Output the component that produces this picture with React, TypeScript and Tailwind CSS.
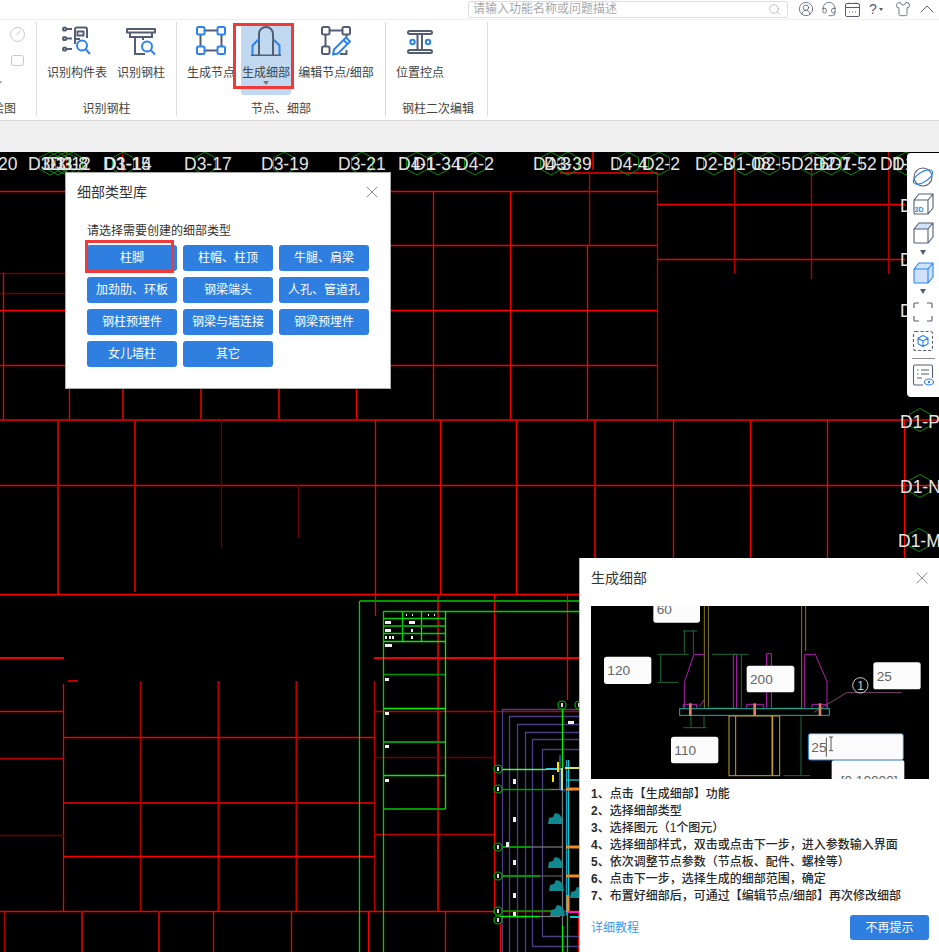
import React from "react";
import { ChevronUp, CircleUserRound, Headset, Search, Shirt, X } from "lucide-react";

const R = "#ff0000";
const M = "#f00000";
const D = "#b80000";
const K = "#700000";
const G = "#00d000";
const DG = "#009800";
const LG = "#00f000";
const P = "#4a3d84";
const BLUE = "#2b83ee";
const GREY = "#545e72";

// x1, y1, x2, y2, colour, width
type Seg = [number, number, number, number, string, number?];

const redLines: Seg[] = [
  [0, 191.5, 657, 191.5, M],
  [0, 273.5, 65, 273.5, K],
  [0, 293.5, 65, 293.5, K],
  [0, 310.5, 657, 310.5, R],
  [0, 365.5, 657, 365.5, M],
  [391, 245.5, 657, 245.5, M],
  [3.5, 273, 3.5, 420, M],
  [69.5, 388, 69.5, 420, M],
  [123, 388, 123, 420, D, 2],
  [201, 388, 201, 420, D, 2],
  [279, 388, 279, 420, D, 2],
  [356.5, 388, 356.5, 420, M],
  [66.5, 152, 66.5, 172, D],
  [122.5, 152, 122.5, 172, D],
  [433.5, 191, 433.5, 420, M],
  [510.5, 191, 510.5, 420, M],
  [587.5, 245, 587.5, 420, R],
  [589.5, 172, 589.5, 245, D],
  [657.5, 172, 657.5, 420, D],
  [593, 152, 593, 170, D, 2],
  [560, 173, 657, 173, D, 2],
  [657, 204.5, 905, 204.5, M],
  [657, 259.5, 905, 259.5, M],
  [734.5, 152, 734.5, 274, D],
  [811.5, 152, 811.5, 279, D],
  [888.5, 152, 888.5, 274, D],
  [0, 420, 939, 420, D, 2],
  [0, 485.5, 939, 485.5, M],
  [58, 420, 58, 594, D, 2],
  [135, 420, 135, 592, D, 2],
  [221.5, 420, 221.5, 547, K],
  [298.5, 485, 298.5, 538, K],
  [375.5, 420, 375.5, 616, M],
  [440.5, 420, 440.5, 594, M],
  [516.5, 420, 516.5, 594, M],
  [595, 420, 595, 558, D, 2],
  [673.5, 420, 673.5, 558, M],
  [750.5, 420, 750.5, 558, M],
  [827.5, 420, 827.5, 558, R],
  [904.5, 420, 904.5, 558, R],
  [0, 594.5, 579, 594.5, R],
  [438, 594, 438, 911, D, 2],
  [494.5, 594, 494.5, 911, M],
  [567.5, 594, 567.5, 700, M],
  [0, 658, 64, 658, M, 2],
  [374, 658, 579, 658, M, 2],
  [68, 681, 78, 681, D, 2],
  [374.5, 681, 374.5, 911, D],
  [374, 711.5, 579, 711.5, D],
  [374, 757.5, 494, 757.5, K],
  [374, 834.5, 494, 834.5, D],
  [63.5, 684, 63.5, 911, M],
  [140.5, 681, 140.5, 911, D],
  [218.5, 681, 218.5, 911, D, 2],
  [296.5, 681, 296.5, 911, D, 2],
  [0, 711.5, 64, 711.5, M],
  [0, 758.5, 64, 758.5, D],
  [0, 835.5, 64, 835.5, K],
  [64, 737.5, 374, 737.5, M],
  [64, 803, 374, 803, D, 2],
  [64, 856.5, 374, 856.5, R],
  [0, 911.5, 579, 911.5, M],
  [4.5, 911, 4.5, 952, D],
  [82, 911, 82, 952, D, 2],
  [159, 911, 159, 952, D, 2],
  [213.5, 911, 213.5, 952, M],
  [291.5, 911, 291.5, 952, M],
  [368.5, 911, 368.5, 952, R],
  [445.5, 911, 445.5, 952, M],
  [500.5, 911, 500.5, 952, M],
  [578.5, 911, 578.5, 952, M],
];

const greenLines: Seg[] = [
  [359.5, 601, 359.5, 952, G],
  [360, 601, 579, 601, DG, 2],
  [383.5, 611, 383.5, 952, G],
  [384, 611.5, 579, 611.5, G],
  [445.5, 611, 445.5, 809, LG],
  [402.5, 611, 402.5, 641, G],
  [421.5, 611, 421.5, 641, LG],
  [384, 618.5, 445, 618.5, G],
  [384, 626, 445, 626, DG, 2],
  [384, 633.5, 445, 633.5, G],
  [384, 641.5, 445, 641.5, LG],
  [384, 674.5, 445, 674.5, DG],
  [384, 708.5, 445, 708.5, LG],
  [384, 742, 445, 742, DG, 2],
  [384, 775.5, 445, 775.5, LG],
  [384, 809, 445, 809, DG, 2],
];

const planLines: Seg[] = [
  [502, 709.5, 579, 709.5, P],
  [502.5, 709, 502.5, 952, P],
  [509.5, 716.5, 579, 716.5, P],
  [509.5, 716, 509.5, 952, P],
  [517.5, 724.5, 579, 724.5, P],
  [517.5, 724, 517.5, 952, P],
  [525.5, 732.5, 579, 732.5, P],
  [525.5, 732, 525.5, 952, P],
  [532.5, 739.5, 579, 739.5, P],
  [532.5, 739, 532.5, 946, P],
  [532, 946.5, 579, 946.5, P],
  [542.5, 749.5, 579, 749.5, P],
  [542.5, 749, 542.5, 936, P],
  [542, 936.5, 579, 936.5, P],
  [562.5, 705, 562.5, 780, LG],
  [562.5, 925, 562.5, 952, LG],
  [567.5, 900, 567.5, 952, G],
  [499, 769.5, 546, 769.5, "#50f050"],
  [499, 789.5, 550, 789.5, DG],
  [550, 789.5, 562, 789.5, "#777777"],
  [499, 847, 530, 847, DG, 2],
  [530, 847, 562, 847, "#777777"],
  [499, 876, 540, 876, DG, 2],
  [540, 876, 562, 876, "#555555"],
  [499, 911, 552, 911, DG],
  [499, 916.5, 540, 916.5, LG],
  [540, 916.5, 560, 916.5, "#777777"],
  [562.5, 790, 562.5, 925, "#777777"],
  [566.5, 760, 566.5, 915, "#14a0c8"],
  [568.5, 760, 568.5, 912, "#14c8c8"],
  [546, 769, 562, 769, "#40c8e0", 2],
  [566, 780, 579, 780, "#14c8c8"],
  [560, 755, 560, 790, "#2a6cc8"],
  [560, 790, 572, 790, "#2a6cc8"],
  [566, 789, 579, 789, "#f08c28", 3],
  [566, 847, 579, 847, "#f08c28", 3],
  [566, 876, 579, 876, "#f08c28", 3],
  [568, 895, 568, 912, "#f08c28", 3],
  [565, 768, 579, 768, "#d8e060", 2],
  [562, 768, 562, 790, "#d8e060", 2],
  [558, 762, 558, 772, "#ffe000", 2],
  [553, 775, 553, 782, "#ffe000", 2],
  [568, 912, 579, 912, "#f020c0", 2],
  [570, 917, 579, 917, "#14c8c8", 2],
];

const labels: [number, string][] = [
  [-2, "20"], [28, "D3-11"], [43, "D3-12"], [50, "D3-8"], [104, "D1-14"], [103, "D3-15"],
  [184, "D3-17"], [261, "D3-19"], [338, "D3-21"], [398, "D4-1"], [413, "D1-34"], [456, "D4-2"],
  [533, "D4-3"], [544, "D3-39"], [610, "D4-4"], [642, "D2-2"], [695, "D2-3"], [723, "D1-08"],
  [753, "D2-5"], [791, "D2-6"], [813, "D2-7"], [829, "D1-52"], [880, "D1-53"], [892, "D1-54"],
];

const hexes = [
  50, 58, 66, 72, 123, 205, 284, 362, 417, 438, 475, 551, 568, 628, 659, 714, 745, 769, 812, 831, 851, 906,
];

const sideLabels: [number, number, string][] = [
  [900, 428, "D1-P"], [900, 493, "D1-N"], [898, 547, "D1-M"],
  [900, 212, "D"], [900, 266, "D"], [900, 317, "D"],
];
const sideHexes: [number, number][] = [[920, 420], [920, 486], [919, 540]];

const nodes: [number, number][] = [[498, 769], [498, 789], [498, 847], [498, 876], [498, 911], [498, 920], [562, 705], [579, 705]];

const specks: [number, number, number, number][] = [
  [406, 614, 1, 2], [412, 614, 1, 2], [428, 614, 1, 2], [434, 614, 1, 2],
  [385, 621, 6, 3], [409, 621, 6, 3], [385, 629, 6, 3], [411, 629, 2, 3],
  [385, 636, 2, 3], [389, 636, 2, 3], [392, 636, 2, 3], [411, 636, 2, 3],
  [385, 644, 7, 3], [385, 678, 4, 3], [385, 712, 4, 3], [385, 745, 4, 3], [385, 779, 4, 3],
  [513, 779, 3, 5], [513, 817, 3, 5], [506, 842, 3, 5], [513, 860, 3, 5], [513, 893, 3, 5], [513, 912, 3, 4],
  [568, 721, 6, 3],
];

const blobs: [number, number][] = [[555, 819], [555, 863], [556, 886], [557, 911], [577, 893]];

function hexPoints(cx: number, cy: number) {
  const r = 11.5;
  const w = 10.5;
  return `${cx},${cy - r} ${cx + w},${cy - r / 2} ${cx + w},${cy + r / 2} ${cx},${cy + r} ${cx - w},${cy + r / 2} ${cx - w},${cy - r / 2}`;
}

// thin lines are a little over 1px, the original was resampled
function Segs({ items }: { items: Seg[] }) {
  return (
    <>
      {items.map(([x1, y1, x2, y2, c, w], i) => (
        <line key={i} x1={x1} y1={y1} x2={x2} y2={y2} stroke={c} strokeWidth={w ?? 1.3} />
      ))}
    </>
  );
}

function CadCanvas() {
  return (
    <svg className="block bg-black" width={939} height={800} viewBox="0 152 939 800">
      <Segs items={redLines} />
      <Segs items={greenLines} />
      <Segs items={planLines} />
      <g shapeRendering="crispEdges">
        {specks.map(([x, y, w, h], i) => (
          <rect key={i} x={x} y={y} width={w} height={h} fill="#f0f0f0" />
        ))}
      </g>
      {blobs.map(([x, y], i) => (
        <path key={i} d={`M${x - 7} ${y + 5} l1 -6 l4 -1 l2 -4 l4 1 l3 4 l1 6 z`} fill="#0f8a90" />
      ))}
      {nodes.map(([x, y], i) => (
        <g key={i}>
          <circle cx={x} cy={y} r={4} fill="#000" stroke="#00b000" strokeWidth={1.2} />
          <rect x={x - 1} y={y - 2} width={2} height={4} fill="#ddd" />
        </g>
      ))}
      {hexes.map((x, i) => (
        <polygon key={i} points={hexPoints(x, 163.5)} fill="none" stroke="#0a8a0a" strokeWidth={1} />
      ))}
      {sideHexes.map(([x, y], i) => (
        <polygon key={i} points={hexPoints(x, y)} fill="none" stroke="#0a8a0a" strokeWidth={1} />
      ))}
      <g fontFamily="'Liberation Sans', sans-serif" fontSize={17.5} fill="#e4e4e4">
        {labels.map(([x, t], i) => (
          <text key={i} x={x} y={170}>{t}</text>
        ))}
        {sideLabels.map(([x, y, t], i) => (
          <text key={i} x={x} y={y}>{t}</text>
        ))}
      </g>
    </svg>
  );
}

function TableIcon() {
  return (
    <svg width={30} height={30} viewBox="0 0 30 30" fill="none" strokeWidth={2}>
      <g stroke={GREY}>
        <circle cx={2.6} cy={3} r={1.6} />
        <circle cx={2.6} cy={12.5} r={1.6} />
        <circle cx={2.6} cy={23} r={1.6} />
        <path d="M5 3h5M5 12.5h5M5 23h5" />
        <path d="M13 18V3.5A2 2 0 0 1 15 1.5h8a2 2 0 0 1 2 2V12" />
        <rect x={15.5} y={5.5} width={6} height={4} />
        <path d="M14 13h4" />
      </g>
      <g stroke={BLUE}>
        <circle cx={20} cy={19.5} r={5} />
        <path d="M24 23.5l4 4.5" />
      </g>
    </svg>
  );
}

function SteelIcon() {
  return (
    <svg width={30} height={30} viewBox="0 0 30 30" fill="none" strokeWidth={2}>
      <g stroke={GREY}>
        <path d="M1 3h28v3.5H1z" strokeLinejoin="round" />
        <path d="M4 6.5V11h22V6.5" />
        <path d="M9 11v17h10" />
        <path d="M17 11v3" />
      </g>
      <g stroke={BLUE}>
        <circle cx={21} cy={20.5} r={5} />
        <path d="M25 24.5l4 4" />
      </g>
    </svg>
  );
}

function NodesIcon({ color }: { color: string }) {
  return (
    <svg width={30} height={30} viewBox="0 0 30 30" fill="none" strokeWidth={2}>
      <path d="M8.5 4.5h13M8.5 24.5h13M4.5 8.5v12M25.5 8.5v12" stroke={GREY} />
      <g stroke={color}>
        <rect x={1} y={1} width={7.5} height={7.5} rx={1.5} />
        <rect x={21.5} y={1} width={7.5} height={7.5} rx={1.5} />
        <rect x={1} y={20.5} width={7.5} height={7.5} rx={1.5} />
        <rect x={21.5} y={20.5} width={7.5} height={7.5} rx={1.5} />
      </g>
    </svg>
  );
}

function DetailIcon() {
  return (
    <svg width={30} height={30} viewBox="0 0 30 30" fill="none" strokeWidth={2}>
      <path d="M8 29V8a7 7 0 0 1 14 0v21" stroke={GREY} />
      <path d="M8 13l-6.5 6.5v9.500M22 13l6.5 6.5v9.500" stroke={BLUE} />
      <path d="M0 29.5h30" stroke={GREY} />
    </svg>
  );
}

function EditIcon() {
  return (
    <svg width={30} height={30} viewBox="0 0 30 30" fill="none" strokeWidth={2}>
      <path d="M8.5 4.5h13M4.5 8.5v12M25.5 8.5v3M25.5 24v4.5M19 28h7" stroke={GREY} />
      <rect x={1} y={1} width={7.5} height={7.5} rx={1.5} stroke={GREY} />
      <rect x={21.5} y={1} width={7.5} height={7.5} rx={1.5} stroke={GREY} />
      <rect x={1} y={20.5} width={7.5} height={7.5} rx={1.5} stroke={GREY} />
      <path d="M13 23.5L25 11.5l4 4L17 27.5l-5 1z" stroke={BLUE} strokeLinejoin="round" />
      <path d="M22.5 14l4 4" stroke={BLUE} />
    </svg>
  );
}

function PositionIcon() {
  return (
    <svg width={30} height={30} viewBox="0 0 30 30" fill="none" strokeWidth={2}>
      <path d="M4.5 5h21a1.5 1.5 0 0 1 0 3h-21a1.5 1.5 0 0 1 0-3zM4.5 24h21a1.5 1.5 0 0 1 0 3h-21a1.5 1.5 0 0 1 0-3z" stroke={GREY} />
      <path d="M12.5 8v16M17 8v16" stroke={GREY} />
      <circle cx={7.5} cy={16} r={2.2} stroke={BLUE} />
      <circle cx={23} cy={16} r={2.2} stroke={BLUE} />
    </svg>
  );
}

function GroupZeroDrawing() {
  return (
    <svg width={36} height={78} viewBox="0 0 36 78" fill="none" stroke="#c8c8c8" strokeWidth={1}>
      <circle cx={17.5} cy={12.5} r={7} />
      <path d="M17 13l3-4" />
      <rect x={11.5} y={33.5} width={12} height={10} rx={2} />
      <path d="M0 59h2.5L0 62z" fill="#aaa" stroke="none" />
    </svg>
  );
}

function RibbonItem({ label, icon, labelWidth }: { label: string; icon: React.ReactNode; labelWidth: string }) {
  return (
    <div className={`flex flex-col items-center pt-px ${labelWidth}`}>
      {icon}
      <span className="mt-[9px] text-xs leading-4 whitespace-nowrap text-[#444]">{label}</span>
    </div>
  );
}

function Ribbon() {
  return (
    <div className="flex h-[101px] border-b border-[#d9d9d9] bg-white">
      <div className="mt-0.5 flex h-[94px] w-[37px] flex-col border-r border-[#dcdcdc]">
        <div className="h-[79px]">
          <GroupZeroDrawing />
        </div>
        <div className="flex h-[15px] justify-end overflow-hidden pr-5 text-xs leading-4 whitespace-nowrap text-[#444]">绘图</div>
      </div>

      <div className="mt-0.5 flex h-[94px] w-[140px] flex-col border-r border-[#dcdcdc]">
        <div className="flex h-[79px] gap-2.5 pt-[3px] pl-2.5">
          <RibbonItem label="识别构件表" icon={<TableIcon />} labelWidth="w-[60px]" />
          <RibbonItem label="识别钢柱" icon={<SteelIcon />} labelWidth="w-12" />
        </div>
        <div className="h-[15px] text-center text-xs leading-4 text-[#444]">识别钢柱</div>
      </div>

      <div className="mt-0.5 flex h-[94px] w-[209px] flex-col border-r border-[#dcdcdc]">
        <div className="flex h-[79px] pt-[3px] pl-2.5">
          <RibbonItem label="生成节点" icon={<NodesIcon color={BLUE} />} labelWidth="w-12" />
          <div className="relative ml-1.5 flex h-[70px] w-[50px] flex-col items-center rounded-[3px] bg-[#c0d8f0] pt-px">
            <DetailIcon />
            <span className="mt-[9px] text-xs leading-4 whitespace-nowrap text-[#444]">生成细部</span>
            <span className="h-0 w-0 border-x-[3.5px] border-t-4 border-x-transparent border-t-[#777]" />
            <span className="absolute -top-0.5 -left-[8px] h-[66px] w-[61px] border-[3px] border-[#f03a3a]" />
          </div>
          <div className="ml-1.5">
            <RibbonItem label="编辑节点/细部" icon={<EditIcon />} labelWidth="w-[78px]" />
          </div>
        </div>
        <div className="h-[15px] text-center text-xs leading-4 text-[#444]">节点、细部</div>
      </div>

      <div className="mt-0.5 flex h-[94px] w-[102px] flex-col border-r border-[#dcdcdc]">
        <div className="h-[79px] pt-[3px] pl-2.5">
          <RibbonItem label="位置控点" icon={<PositionIcon />} labelWidth="w-12" />
        </div>
        <div className="h-[15px] pl-4 text-xs leading-4 text-[#444]">钢柱二次编辑</div>
      </div>
    </div>
  );
}

function TitleBar() {
  return (
    <div className="flex h-5 items-center border-b border-[#eeeeee] bg-white pb-px pl-[468px]">
      <div className="flex h-[17px] w-[320px] items-center justify-between rounded-[2px] border border-[#dddddd] pr-[6px] pl-1">
        <span className="text-xs leading-none text-[#a8a8a8]">请输入功能名称或问题描述</span>
        <Search size={13} strokeWidth={1.3} color="#aaaaaa" />
      </div>
      <CircleUserRound className="ml-[10px]" size={16} strokeWidth={1.2} color={GREY} />
      <Headset className="ml-[7px]" size={16} strokeWidth={1.2} color={GREY} />
      <svg className="ml-2" width={15} height={15} viewBox="0 0 15 15" fill="none" stroke={GREY} strokeWidth={1}>
        <rect x={0.5} y={1.5} width={14} height={13} rx={1.5} />
        <path d="M0.5 5.5h14M4 1.5V0.5M11 1.5V0.5" />
        <path d="M4 10h1M7 10h1M10 10h1" />
      </svg>
      <span className="ml-[9px] text-sm leading-none text-[#545e72]">?</span>
      <span className="ml-0.5 h-0 w-0 border-x-[2.5px] border-t-[3px] border-x-transparent border-t-[#545e72]" />
      <Shirt className="ml-[12px]" size={16} strokeWidth={1.2} color={GREY} />
      <ChevronUp className="ml-1" size={24} strokeWidth={1} color={GREY} />
    </div>
  );
}

function Cube({ fill, stroke, blueTop, label }: { fill?: string; stroke: string; blueTop?: boolean; label?: boolean }) {
  return (
    <svg width={24} height={24} viewBox="0 0 24 24" fill="none" strokeWidth={1.1} strokeLinejoin="round">
      {fill && <path d="M3 8h14v14H3z" fill={fill} />}
      {fill && <path d="M3 8l5-6h14l-5 6zM17 8l5-6v14l-5 6z" fill={fill} />}
      {blueTop && <path d="M3 8l5-6h14l-5 6z" fill="#cfe2fa" />}
      <path d="M3 8h14v14H4a1 1 0 0 1-1-1zM3 8l5-6h14l-5 6zM17 8l5-6v14l-5 6z" stroke={stroke} />
      {label && (
        <text x={3.6} y={20} fontSize={7} fontWeight={700} fill={BLUE} fontFamily="'Liberation Sans', sans-serif">3D</text>
      )}
    </svg>
  );
}

function Caret() {
  return <span className="h-0 w-0 border-x-[3.5px] border-t-[5px] border-x-transparent border-t-[#545e72]" />;
}

function ViewPanel() {
  return (
    <div className="absolute top-[153px] right-0 flex h-[244px] w-8 flex-col items-center rounded-l-[4px] bg-white pt-3">
      <svg width={24} height={24} viewBox="0 0 24 24" fill="none" strokeWidth={1.1}>
        <circle cx={12} cy={12} r={9} stroke={GREY} />
        <ellipse cx={12} cy={12} rx={11} ry={5} stroke={BLUE} transform="rotate(-32 12 12)" />
      </svg>
      <div className="mt-[3px] h-6">
        <Cube stroke={GREY} label />
      </div>
      <div className="mt-[5px] h-6">
        <Cube stroke={GREY} blueTop />
      </div>
      <div className="mt-[5px] flex h-[5px] items-center">
        <Caret />
      </div>
      <div className="mt-[6px] h-6">
        <Cube stroke={BLUE} fill="#cfe2fa" />
      </div>
      <div className="mt-[4px] flex h-[5px] items-center">
        <Caret />
      </div>
      <svg className="mt-[6px]" width={24} height={24} viewBox="0 0 24 24" fill="none" stroke={GREY} strokeWidth={1.1}>
        <path d="M3 8V4a1 1 0 0 1 1-1h4M16 3h4a1 1 0 0 1 1 1v4M21 16v4a1 1 0 0 1-1 1h-4M8 21H4a1 1 0 0 1-1-1v-4" />
      </svg>
      <svg className="mt-[5px]" width={24} height={24} viewBox="0 0 24 24" fill="none" strokeWidth={1.1}>
        <rect x={2.5} y={2.5} width={19} height={19} rx={2} stroke={GREY} strokeDasharray="3 2" />
        <path d="M12 6.5l5 2.8v5.4l-5 2.8-5-2.8V9.3zM7 9.3l5 2.8 5-2.8M12 12.1v5.4" stroke={BLUE} strokeLinejoin="round" />
      </svg>
      <div className="mt-[5px] h-px w-[23px] bg-[#8a8f9a]" />
      <svg className="mt-1" width={24} height={24} viewBox="0 0 24 24" fill="none" strokeWidth={1.1}>
        <path d="M12 22H4a1.5 1.5 0 0 1-1.5-1.5v-17A1.5 1.5 0 0 1 4 2h16a1.5 1.5 0 0 1 1.5 1.5V15" stroke={GREY} />
        <path d="M6 7h1.5M10 7h8M6 11h1.5M10 11h8M6 15h5" stroke={GREY} />
        <ellipse cx={18} cy={19} rx={4.5} ry={3} stroke={BLUE} />
        <circle cx={18} cy={19} r={1.2} fill={BLUE} />
      </svg>
    </div>
  );
}

const detailTypes = [
  "柱脚", "柱帽、柱顶", "牛腿、肩梁",
  "加劲肋、环板", "钢梁端头", "人孔、管道孔",
  "钢柱预埋件", "钢梁与墙连接", "钢梁预埋件",
  "女儿墙柱", "其它",
];

function TypeDialog() {
  return (
    <div className="absolute top-[172px] left-[65px] h-[217px] w-[326px] border border-[#aaaaaa] bg-white">
      <div className="flex h-[38px] items-center justify-between pr-[8px] pl-[11px] text-sm text-[#333]">
        <span>细部类型库</span>
        <X size={20} strokeWidth={1} color="#777777" />
      </div>
      <div className="mt-[12px] pl-[21px] text-xs leading-4 text-[#333]">请选择需要创建的细部类型</div>
      <div className="mt-1.5 ml-[21px] grid w-[282px] grid-cols-3 gap-1.5">
        {detailTypes.map((t, i) => (
          <div key={t} className="relative flex h-[26px] items-center justify-center rounded-[3px] bg-[#2e7fe0] text-xs text-white">
            {t}
            {i === 0 && <span className="absolute -top-[5px] -left-0.5 h-[33px] w-[89px] border-[3px] border-[#f03a3a]" />}
          </div>
        ))}
      </div>
    </div>
  );
}

// coordinates below are in the 3x zoomed crop of the hint picture
function HintPicture() {
  const box = (x: number, y: number, w: number, h: number, t: string, tx?: number) => (
    <g>
      <rect x={x} y={y} width={w} height={h} rx={8} fill="#fbfbfb" />
      <text x={tx ?? x + 10} y={y + h / 2 + 15} fontSize={41} fill="#666" fontFamily="'Liberation Sans', sans-serif">{t}</text>
    </g>
  );
  return (
    <svg className="block" width={338} height={173} viewBox="33 153 1014 519">
      <rect x={33} y={153} width={1014} height={519} fill="#000" />
      <g fill="none" strokeWidth={3}>
        <path d="M373 153V460M385 153V456M665 153V460M677 153V288" stroke="#8a7c1c" />
        <path d="M313 460V382L342 298H374" stroke="#b020b0" />
        <path d="M674 460V298H706L741 380V460" stroke="#b020b0" />
        <path d="M460 460V298H470V460M560 460V296H574V460" stroke="#c020c0" />
        <path d="M310 460V448H350V460M500 460V448H550V460M696 460V448H742V460M358 455L373 434" stroke="#b020b0" />
        <path d="M380 460H470M578 460H665" stroke="#a09020" />
        <rect x={299} y={461} width={449} height={20} stroke="#18b0a0" />
        <rect x={447} y={483} width={152} height={179} stroke="#c8a020" />
        <path d="M467 483V662" stroke="#c8a020" />
        <path d="M577 483V662" stroke="#c8a020" strokeWidth={5} />
        <g stroke="#1c6a3c">
          <path d="M313 225V296M340 225V296M310 228h42M232 298H326M396 298h110M242 298V382M232 382H295M484 298V462M310 518h70M333 482V518M372 482V518M663 482V662M610 662h80" />
        </g>
        <path d="M702 472L800 413H965" stroke="#7a4a6a" />
        <circle cx={841} cy={391} r={23} stroke="#cccccc" />
      </g>
      <g fill="#e08060">
        <rect x={327} y={445} width={8} height={38} />
        <rect x={520} y={445} width={8} height={38} />
        <rect x={716} y={445} width={8} height={38} />
      </g>
      <text x={832} y={406} fontSize={36} fill="#ccc" fontFamily="'Liberation Sans', sans-serif">1</text>
      {box(220, 123, 140, 80, "60")}
      {box(72, 305, 142, 82, "120")}
      {box(500, 332, 143, 80, "200")}
      {box(880, 322, 142, 81, "25")}
      {box(273, 545, 142, 80, "110")}
      {box(755, 615, 218, 120, "[0,10000]", 782)}
      <rect x={685} y={536} width={285} height={79} rx={6} fill="#fbfbfb" stroke="#2a7bd0" strokeWidth={3} />
      <text x={694} y={591} fontSize={41} fill="#666" fontFamily="'Liberation Sans', sans-serif">25</text>
      <path d="M739 548V605M747 546h12M753 546V586M747 587h12" stroke="#555" strokeWidth={3} fill="none" />
    </svg>
  );
}

const steps = [
  ["1", "、点击【生成细部】功能"],
  ["2", "、选择细部类型"],
  ["3", "、选择图元（1个图元）"],
  ["4", "、选择细部样式，双击或点击下一步，进入参数输入界面"],
  ["5", "、依次调整节点参数（节点板、配件、螺栓等）"],
  ["6", "、点击下一步，选择生成的细部范围，确定"],
  ["7", "、布置好细部后，可通过【编辑节点/细部】再次修改细部"],
];

function HintDialog() {
  return (
    <div className="absolute top-[558px] left-[579px] h-[394px] w-[360px] border-l border-[#bbbbbb] bg-white pl-[11px]">
      <div className="flex h-10 items-center justify-between pr-[7px] text-sm text-[#333]">
        <span>生成细部</span>
        <X size={20} strokeWidth={1} color="#777777" />
      </div>
      <div className="mt-2">
        <HintPicture />
      </div>
      <div className="mt-[7px] text-xs leading-[17px] font-medium text-[#2a2a2a]">
        {steps.map(([n, s]) => (
          <div key={n}>
            <span className="font-bold">{n}</span>
            {s}
          </div>
        ))}
      </div>
      <div className="mt-[10px] flex items-center justify-between pr-[10px]">
        <span className="text-xs text-[#3a9bf0]">详细教程</span>
        <div className="flex h-[25px] w-[79px] items-center justify-center rounded-[3px] bg-[#2e7fe0] text-xs text-white">不再提示</div>
      </div>
    </div>
  );
}

export default function App() {
  return (
    <div className="relative flex h-[952px] w-[939px] flex-col overflow-hidden bg-black [font-family:'Liberation_Sans','Noto_Sans_CJK_SC',sans-serif]">
      <TitleBar />
      <Ribbon />
      <div className="h-[31px] bg-[#f0f0f0]" />
      <CadCanvas />
      <TypeDialog />
      <ViewPanel />
      <HintDialog />
    </div>
  );
}
